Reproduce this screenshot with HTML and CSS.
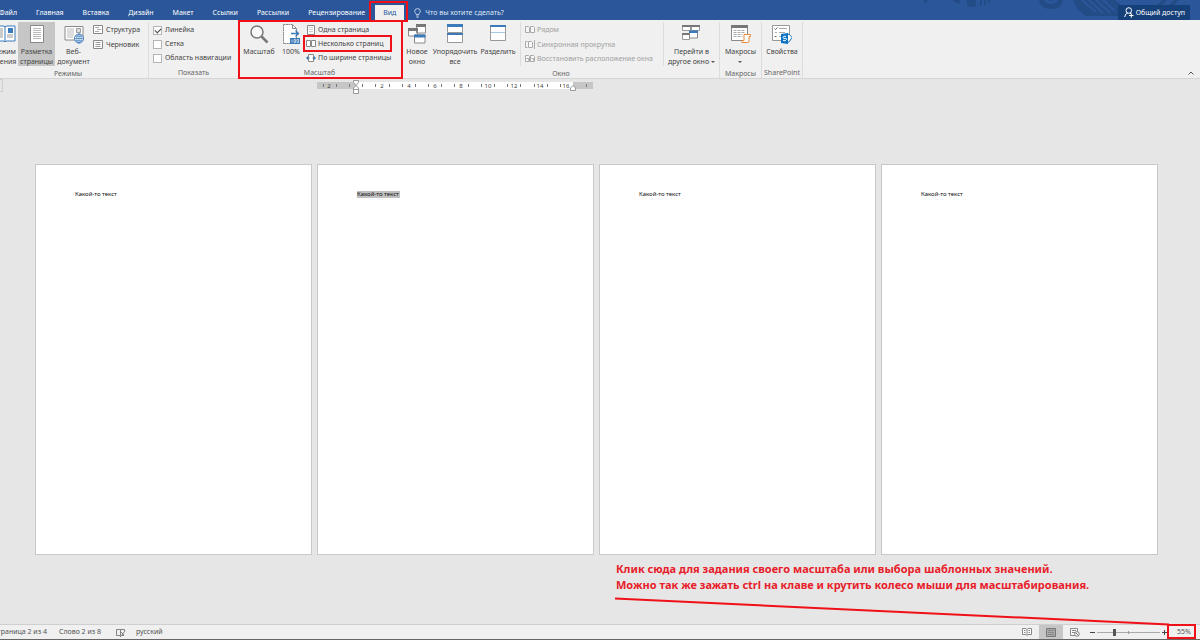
FILE: index.html
```html
<!DOCTYPE html>
<html lang="ru">
<head>
<meta charset="utf-8">
<title>Документ</title>
<link rel="stylesheet" href="styles.css">
</head>
<body>
<header class="titlebar">
  <svg class="titlebar-art" viewBox="0 0 300 20" width="300" height="20" aria-hidden="true">
    <g fill="#234c87">
      <path d="M24 0h3v3h-3zM52 0h8v4q-5-1-8-4zM67 0h9v6q-4 2-9 0zM80 0h2v6h-2zM84 0h2v5h-2zM88 0h2v3h-2z"/>
      <path d="M139 0q1 9 12 9t12-9h-5q-1 4-7 4t-7-4zM148 0h6q-3 2-6 0z"/>
      <path d="M173 0q3 10 13 16h34V4l-5-4z"/>
      <path d="M262 0h5l-9 9h-5zM274 0h5l-9 9h-5z"/>
    </g>
    <path d="M182 0l14 12M189 0l14 13M196 0l14 13M203 0l12 11" stroke="#2b579a" stroke-width="2"/>
  </svg>
  <nav class="tabs">
    <button class="tab">Файл</button>
    <button class="tab">Главная</button>
    <button class="tab">Вставка</button>
    <button class="tab">Дизайн</button>
    <button class="tab">Макет</button>
    <button class="tab">Ссылки</button>
    <button class="tab">Рассылки</button>
    <button class="tab">Рецензирование</button>
    <button class="tab tab-active">Вид<span class="mark mark-tab"></span></button>
  </nav>
  <button class="tell-me">
    <svg width="7" height="10" viewBox="0 0 7 10" fill="none" stroke="#dfe8f5"><path d="M2.2 6.5C2 5.200.7 4.800.7 3.200a2.800 2.600 0 0 1 5.600 0C6.300 4.800 5 5.200 4.800 6.500zM2.200 8h2.600M2.700 9.400h1.600" stroke-width=".8"/></svg>
    Что вы хотите сделать?
  </button>
  <button class="share">
    <svg width="10" height="11" viewBox="0 0 10 11" fill="none" stroke="#fff"><circle cx="4.800" cy="3.500" r="2.800"/><path d="M.7 10q.3-3.500 3-4M6 6l1 .8M5 8.500h4.500M7.300 6.300v4.400"/></svg>
    Общий доступ
  </button>
</header>

<section class="ribbon" aria-label="Вид">
  <div class="group group-modes">
    <div class="tools">
      <button class="big big-read">
        <svg width="22" height="20" viewBox="0 0 22 20"><path d="M1 2h9l1 1 1-1h9v15h-9l-1 1-1-1H1z" fill="#fff" stroke="#3b7abb"/><path d="M11 3v14" stroke="#3b7abb"/><path d="M3 5h6M3 7h6M3 9h6M3 11h6M3 13h6M13 11h6M13 13h6" stroke="#999"/><path d="M14 4h5v5h-5z" fill="#3b7abb"/></svg>
        <span>Режим<br>чтения</span>
      </button>
      <button class="big big-print pressed">
        <svg width="16" height="20" viewBox="0 0 16 20"><path d="M1.500 1.500h13v17h-13z" fill="#fff" stroke="#888"/><path d="M4 4.500h8M4 6.500h8M4 8.500h8M4 10.500h8M4 12.500h8M4 14.500h8" stroke="#bbb"/></svg>
        <span>Разметка<br>страницы</span>
      </button>
      <button class="big big-web">
        <svg width="20" height="20" viewBox="0 0 20 20"><path d="M1 2.500h18V16H1z" fill="#fff" stroke="#888"/><path d="M3 5h7M3 7h7M3 9h7M3 11h7M3 13h6" stroke="#bbb"/><path d="M12.500 4.500h4v4h-4z" fill="#ddd" stroke="#999"/><circle cx="15" cy="14.500" r="4.500" fill="#fff" stroke="#3b7abb"/><path d="M10.500 14.500h9M15 10v9M11.500 12.300h7M11.500 16.700h7" stroke="#3b7abb" stroke-width=".7"/><ellipse cx="15" cy="14.500" rx="2.200" ry="4.500" fill="none" stroke="#3b7abb" stroke-width=".7"/></svg>
        <span>Веб-<br>документ</span>
      </button>
      <div class="stack">
        <button class="small"><svg width="10" height="10" viewBox="0 0 10 10"><path d="M.5.5h9v8h-9z" fill="#fff" stroke="#888"/><path d="M2 2.500h4M4 4.500h4M2 6.500h4" stroke="#aaa"/></svg>Структура</button>
        <button class="small"><svg width="10" height="10" viewBox="0 0 10 10"><path d="M.5.5h9v8h-9z" fill="#fff" stroke="#888"/><path d="M2.500 2.500h5M2.500 4.500h5M2.500 6.500h5" stroke="#999"/></svg>Черновик</button>
      </div>
    </div>
    <div class="caption">Режимы</div>
  </div>

  <div class="group group-show">
    <div class="tools">
      <div class="stack">
        <label class="small"><input type="checkbox" checked>Линейка</label>
        <label class="small"><input type="checkbox">Сетка</label>
        <label class="small"><input type="checkbox">Область навигации</label>
      </div>
    </div>
    <div class="caption">Показать</div>
  </div>

  <div class="group group-zoom">
    <div class="tools">
      <button class="big big-zoom">
        <svg width="20" height="20" viewBox="0 0 20 20" fill="none" stroke="#777"><circle cx="8" cy="8" r="6" fill="#f8f8f8" stroke-width="1.500"/><path d="M12.500 12.500l6 6" stroke-width="2.500"/></svg>
        <span>Масштаб</span>
      </button>
      <button class="big big-hundred">
        <svg width="18" height="20" viewBox="0 0 18 20"><path d="M1.500.500h9l4 4v15h-13z" fill="#fff" stroke="#888" stroke-dasharray="2 .5"/><path d="M10.500.500v4h4" fill="none" stroke="#888"/><path d="M9 9.500h7M13.500 6.500l3 3-3 3" fill="none" stroke="#3b7abb" stroke-width="1.300"/><path d="M8 14h10v6H8z" fill="#3b7abb"/><path d="M10 15.500v3M12 15.500h1.500v3H12zM15 15.500h1.500v3H15z" fill="none" stroke="#fff" stroke-width=".6"/></svg>
        <span>100%</span>
      </button>
      <div class="stack stack-tight">
        <button class="small"><svg width="10" height="10" viewBox="0 0 10 10"><path d="M1.500.500h7v9h-7z" fill="#fff" stroke="#888"/><path d="M3 2.500h4M3 4.500h4M3 6.500h4" stroke="#ccc"/></svg>Одна страница</button>
        <button class="small"><svg width="10" height="10" viewBox="0 0 10 10"><path d="M.5 1.500h4v6h-4zM5.500 1.500h4v6h-4z" fill="#fff" stroke="#888"/></svg>Несколько страниц<span class="mark mark-pages"></span></button>
        <button class="small"><svg width="10" height="10" viewBox="0 0 10 10"><path d="M2.500 1.500h5v7h-5z" fill="#fff" stroke="#888"/><path d="M0 5l2-2v4zM10 5L8 3v4z" fill="#3b7abb"/><path d="M1 5h2.500M6.500 5H9" stroke="#3b7abb"/></svg>По ширине страницы</button>
      </div>
    </div>
    <div class="caption">Масштаб</div>
    <span class="mark mark-group"></span>
  </div>

  <div class="group group-window">
    <div class="tools">
      <button class="big big-new">
        <svg width="18" height="20" viewBox="0 0 18 20"><path d="M8.500 1h9v8h-9zM.500 5h9v7h-9z" fill="#fff" stroke="#888"/><path d="M8 0h10v3H8zM0 4h10v3H0z" fill="#777"/><path d="M6.500 11h10.500v8H6.500z" fill="#fff" stroke="#888"/><path d="M6 10.500h11.500v3H6z" fill="#3b7abb"/></svg>
        <span>Новое<br>окно</span>
      </button>
      <button class="big big-arrange">
        <svg width="16" height="20" viewBox="0 0 16 20"><path d="M.5.5h15v8H.5zM.5 9.500h15v9H.5z" fill="#fff" stroke="#999"/><path d="M0 0h16v3H0zM0 9h16v2H0z" fill="#3b7abb"/></svg>
        <span>Упорядочить<br>все</span>
      </button>
      <button class="big big-split">
        <svg width="16" height="20" viewBox="0 0 16 20"><path d="M.5 1.500h15v15H.5z" fill="#fff" stroke="#999"/><path d="M0 1h16v2H0z" fill="#3b7abb"/><path d="M1 8.500h14" stroke="#a9c6e4"/></svg>
        <span>Разделить</span>
      </button>
      <div class="stack stack-tight stack-divided">
        <button class="small" disabled><svg width="10" height="10" viewBox="0 0 10 10" fill="#f8f8f8" stroke="#aaa"><path d="M.5 1.500h3l1 1v5h-4zM5.500 1.500h3l1 1v5h-4z"/></svg>Рядом</button>
        <button class="small" disabled><svg width="10" height="10" viewBox="0 0 10 10" fill="#f8f8f8" stroke="#aaa"><path d="M2.500 1.500H.500v6h2M3.500 1.500h3l1 1v5h-4zM9.500 0v9"/></svg>Синхронная прокрутка</button>
        <button class="small" disabled><svg width="10" height="10" viewBox="0 0 10 10" fill="#f8f8f8" stroke="#aaa"><path d="M.5 1.500h3l1 1v5h-4zM5.500 1.500h3l1 1v5h-4zM1.500 4.500h2v2M6.500 4.500h2v2"/></svg>Восстановить расположение окна</button>
      </div>
      <button class="big big-switch">
        <svg width="18" height="20" viewBox="0 0 18 20"><path d="M.500 1.500h8v5h-8zM9.500 1.500h8v5h-8zM.500 9.500h7v6h-7z" fill="#fff" stroke="#999"/><path d="M0 1h9v2H0zM9 1h9v2H9zM0 9h7v2H0z" fill="#777"/><path d="M7.500 7h8v7h-8z" fill="#fff" stroke="#888"/><path d="M7 6.500h9v2.500H7z" fill="#3b7abb"/></svg>
        <span>Перейти в<br>другое окно <i class="arrow"></i></span>
      </button>
    </div>
    <div class="caption">Окно</div>
  </div>

  <div class="group group-macros">
    <div class="tools">
      <button class="big big-wide">
        <svg width="20" height="20" viewBox="0 0 20 20"><path d="M.5 1.500h16v15H.5z" fill="#fff" stroke="#888"/><path d="M0 1h17v3H0z" fill="#777"/><path d="M2.500 6.500h12M2.500 8.500h12M2.500 10.500h9M2.500 12.500h9" stroke="#aaa" stroke-dasharray="3 1"/><path d="M13 10.500h6.500v2H18V17q0 1.500-1.500 1.500H11v-2h2z" fill="#fff" stroke="#e8883a"/></svg>
        <span>Макросы<br><i class="arrow"></i></span>
      </button>
    </div>
    <div class="caption">Макросы</div>
  </div>

  <div class="group group-share">
    <div class="tools">
      <button class="big big-wide">
        <svg width="20" height="20" viewBox="0 0 20 20"><path d="M.5 1.500h17v15H.5z" fill="#fff" stroke="#999"/><path d="M2.500 4.500l1 1 2-2M2.500 12.500h2" fill="none" stroke="#666"/><path d="M7 4.500h8M7 8.500h6M7 12.500h3M3 8.500h2" stroke="#aaa"/><path d="M14 11l3-1 3 3.500-3 4.500-3 1" fill="#fff" stroke="#1b75bb"/><path d="M9 10l7-1v11l-7-1z" fill="#0a73c5"/><path d="M14 12.500q-3-.8-3 .8t2.500 1.300-.3 2.200l-2.200-.5" fill="none" stroke="#fff"/></svg>
        <span>Свойства</span>
      </button>
    </div>
    <div class="caption">SharePoint</div>
  </div>
  <button class="collapse" aria-label="Свернуть ленту"><svg width="6" height="4" viewBox="0 0 6 4"><path d="M.5 3.500L3 1l2.500 2.500" fill="none" stroke="#555"/></svg></button>
</section>

<main class="workspace">
  <div class="corner"></div>
  <svg class="ruler" viewBox="0 0 276 14" width="276" height="14" role="img" aria-label="Линейка">
    <path d="M0 2h276v7H0z" fill="#c6c6c6"/><path d="M39 2h217v7H39z" fill="#fff"/>
    <path d="M6.500 4v3M19.500 4v3M32.500 4v3M45.500 4v3M58.500 4v3M72.500 4v3M85.500 4v3M98.500 4v3M111.500 4v3M124.500 4v3M137.500 4v3M151.500 4v3M164.500 4v3M177.500 4v3M190.500 4v3M203.500 4v3M217.500 4v3M230.500 4v3M243.500 4v3M269.500 4v3" stroke="#777"/>
    <g class="ruler-text"><text x="12" y="8">2</text><text x="65" y="8">2</text><text x="92" y="8">4</text><text x="118" y="8">6</text><text x="144" y="8">8</text><text x="171" y="8">10</text><text x="197" y="8">12</text><text x="223" y="8">14</text><text x="249" y="8">16</text></g>
    <path d="M36.500.500h5v2L39 5.500l-2.500-3zM39 5.500l2.500 2.500v5.500h-5V8zM36.500 9.500h5M253.500 10.500V8L256 5.500 258.500 8v2.500z" fill="#fff" stroke="#999"/>
  </svg>
  <div class="pages">
    <article class="page"><p>Какой-то текст</p></article>
    <article class="page"><p><mark>Какой-то текст&nbsp;</mark></p></article>
    <article class="page"><p>Какой-то текст</p></article>
    <article class="page"><p>Какой-то текст</p></article>
  </div>
  <div class="note">Клик сюда для задания своего масштаба или выбора шаблонных значений.<br>Можно так же зажать ctrl на клаве и крутить колесо мыши для масштабирования.
    <svg class="pointer" width="556" height="30" viewBox="0 0 556 30" aria-hidden="true"><path d="M0 1.500L554 27.500" stroke="#f01018" stroke-width="2"/></svg>
  </div>
</main>

<footer class="status">
  <span class="status-page">Страница 2 из 4</span>
  <span>Слово 2 из 8</span>
  <svg class="status-proof" width="10" height="9" viewBox="0 0 10 9" fill="none" stroke="#666"><path d="M4.500 1.500h-4v6h4zM4.500 1.500h4V3M4.500 7.500V9M5 4l3 3M9 3L5.500 7.500H8" stroke-width=".8"/></svg>
  <span>русский</span>
  <div class="views">
    <button class="view" aria-label="Режим чтения"><svg width="10" height="8" viewBox="0 0 10 8" fill="#fff" stroke="#888"><path d="M.5.500h3.500l1 1 1-1h3.500v6H6l-1 1-1-1H.5zM5 1v6M2 2.500h1.500M2 4.500h1.500M6.500 2.500H8M6.500 4.500H8"/></svg></button>
    <button class="view view-active" aria-label="Разметка страницы"><svg width="10" height="9" viewBox="0 0 10 9"><path d="M.5.500h9v8h-9z" fill="#aaa" stroke="#777"/><path d="M2 2.500h6M2 4.500h6M2 6.500h6" stroke="#888"/></svg></button>
    <button class="view" aria-label="Веб-документ"><svg width="10" height="9" viewBox="0 0 10 9" fill="#f8f8f8" stroke="#888"><path d="M.5.500h7v7h-7zM2 2.500h4M2 4.500h3"/><circle cx="7" cy="6" r="2.300"/><path d="M5.500 4.500l3 3"/></svg></button>
  </div>
  <div class="zoom">
    <button class="zoom-step" aria-label="Уменьшить"><svg width="5" height="5" viewBox="0 0 5 5"><path d="M0 2.500h5" stroke="#444"/></svg></button>
    <input class="zoom-range" type="range" min="0" max="100" value="26" aria-label="Масштаб">
    <button class="zoom-step" aria-label="Увеличить"><svg width="5" height="5" viewBox="0 0 5 5"><path d="M0 2.500h5M2.500 0v5" stroke="#444"/></svg></button>
    <button class="zoom-value">55%<span class="mark mark-value"></span></button>
  </div>
</footer>
</body>
</html>
```
FILE: styles.css
```css
* { box-sizing: border-box; }

body {
  margin: 0;
  min-height: 100vh;
  display: flex;
  flex-direction: column;
  overflow: hidden;
  background: #e6e6e6;
  color: #444;
  font: 7px/10px "Noto Sans", "Open Sans", sans-serif;
}

button {
  margin: 0;
  padding: 0;
  border: 0;
  background: none;
  color: inherit;
  font: inherit;
  white-space: nowrap;
}

svg { display: block; flex: none; }

.mark {
  position: absolute;
  border: 2px solid #f01018;
  pointer-events: none;
  z-index: 2;
}

/* title bar */
.titlebar {
  position: relative;
  display: flex;
  align-items: flex-end;
  height: 20px;
  padding-right: 10px;
  background: #2b579a;
  color: #fff;
}
.titlebar-art { position: absolute; right: 0; top: 0; }
.tabs { display: flex; gap: 1px; margin-left: -10px; }
.tab { position: relative; height: 15px; padding: 0 9px; }
.tab-active { padding: 0 8px; background: #f0f0f0; color: #2b579a; }
.mark-tab { inset: -4px -4px -2px -6px; }
.tell-me { display: flex; align-items: center; gap: 4px; height: 15px; margin-left: 10px; color: #dfe8f5; }
.share {
  position: relative;
  display: flex;
  align-items: center;
  gap: 2px;
  height: 15px;
  margin-left: auto;
  padding: 0 5px 0 6px;
  background: #15407a;
}

/* ribbon */
.ribbon {
  display: flex;
  height: 59px;
  padding-top: 2px;
  background: #f0f0f0;
  border-bottom: 1px solid #d5d5d5;
}
.group {
  position: relative;
  display: flex;
  flex-direction: column;
  flex: none;
  border-right: 1px solid #dcdcdc;
}
.group-modes { width: 149px; }
.group-show { width: 89px; padding-left: 4px; border-right: 0; }
.group-zoom { width: 165px; padding-left: 2px; border-right: 0; }
.group-window { width: 317px; }
.group-macros { width: 42px; }
.group-share { width: 41px; }
.tools { display: flex; height: 44px; }
.caption { padding-top: 3px; text-align: center; color: #666; }
.group-modes .caption { padding-right: 12px; }
.group-show .caption,
.group-zoom .caption { padding-right: 4px; }

.big {
  display: flex;
  flex-direction: column;
  align-items: center;
  gap: 3px;
  padding-top: 2px;
}
.big-read { width: 27px; margin-left: -9px; }
.big-print, .big-web { width: 37px; }
.big-zoom { width: 38px; }
.big-hundred { width: 26px; }
.big-new { width: 28px; }
.big-arrange { width: 48px; }
.big-split { width: 38px; }
.big-switch { flex: 1; }
.big-wide { width: 100%; }
.pressed { background: #c6c6c6; }

.stack {
  display: flex;
  flex-direction: column;
  align-items: flex-start;
  justify-content: space-between;
  padding-top: 1px;
}
.group-modes .stack { justify-content: flex-start; gap: 1px; }
.group-zoom .stack { margin-left: 2px; }
.stack-divided {
  padding: 1px 10px 0 4px;
  margin-left: 3px;
  border-left: 1px solid #dcdcdc;
  border-right: 1px solid #dcdcdc;
}
.small {
  position: relative;
  display: flex;
  align-items: center;
  gap: 3px;
  height: 14px;
  white-space: nowrap;
}
.group-modes .small { padding-left: 1px; }
.stack-tight .small { gap: 2px; }
.small:disabled { color: #a0a0a0; }
.small input {
  appearance: none;
  width: 9px;
  height: 9px;
  margin: 0;
  border: 1px solid #b4b4b4;
  background: #fff;
}
.small input:checked::after {
  content: "";
  display: block;
  width: 5px;
  height: 3px;
  margin: 1px;
  border: solid #444;
  border-width: 0 0 1px 1px;
  transform: rotate(-45deg);
}
.arrow {
  display: inline-block;
  border: 2px solid transparent;
  border-top-color: #555;
  border-bottom: 0;
  vertical-align: middle;
}
.mark-group { inset: -2px 0 -1px 0; }
.mark-pages { inset: -2px -8px -1px -3px; }
.collapse { align-self: flex-end; margin: 0 6px 3px auto; }

/* document area */
.workspace { flex: 1; position: relative; padding: 1px 42px 0 35px; }
.corner { position: absolute; left: -1px; top: 0; width: 4px; height: 13px; border: 1px solid #d0d0d0; }
.ruler { margin-left: calc((100% + 5px) / 4); }
.ruler-text { font-size: 6px; fill: #444; text-anchor: middle; }
.pages { display: flex; gap: 5px; margin-top: 70px; }
.page {
  flex: 1;
  aspect-ratio: 277 / 391;
  padding: 25px 39px;
  background: #fff;
  border: 1px solid #c8c8c8;
  color: #111;
  font-size: 6px;
  line-height: 8px;
}
.page p { margin: 0; }
.page mark { display: inline-block; height: 7px; line-height: 7px; background: #c0c0c0; color: #111; }
.note {
  position: relative;
  width: max-content;
  margin: 6px 0 0 581px;
  color: #e8202a;
  font-size: 11px;
  line-height: 16px;
  font-weight: 700;
}
.pointer { position: absolute; left: -1px; top: 36px; }

/* status bar */
.status {
  display: flex;
  align-items: center;
  height: 15px;
  background: #f0f0f0;
  border-bottom: 1px solid #666;
  box-shadow: 0 -1px #cfcfcf;
  color: #555;
}
.status-page { margin: 0 12px 0 -7px; }
.status-proof { margin: 0 10px 0 15px; }
.views { display: flex; align-self: stretch; margin-left: auto; }
.view { display: flex; align-items: center; justify-content: center; width: 24px; }
.view-active { background: #c6c6c6; }
.zoom { display: flex; align-items: center; align-self: stretch; margin-left: 3px; }
.zoom-range {
  appearance: none;
  width: 63px;
  height: 9px;
  margin: 0 2px;
  background:
    linear-gradient(#999, #999) center / 1px 3px no-repeat,
    linear-gradient(#aaa, #aaa) center / 100% 1px no-repeat;
}
.zoom-range::-webkit-slider-thumb { appearance: none; width: 3px; height: 7px; background: #555; }
.zoom-value { position: relative; align-self: stretch; width: 29px; margin: 0 4px 0 0; padding-left: 5px; }
.mark-value { inset: -1px 0 0 0; }
```
